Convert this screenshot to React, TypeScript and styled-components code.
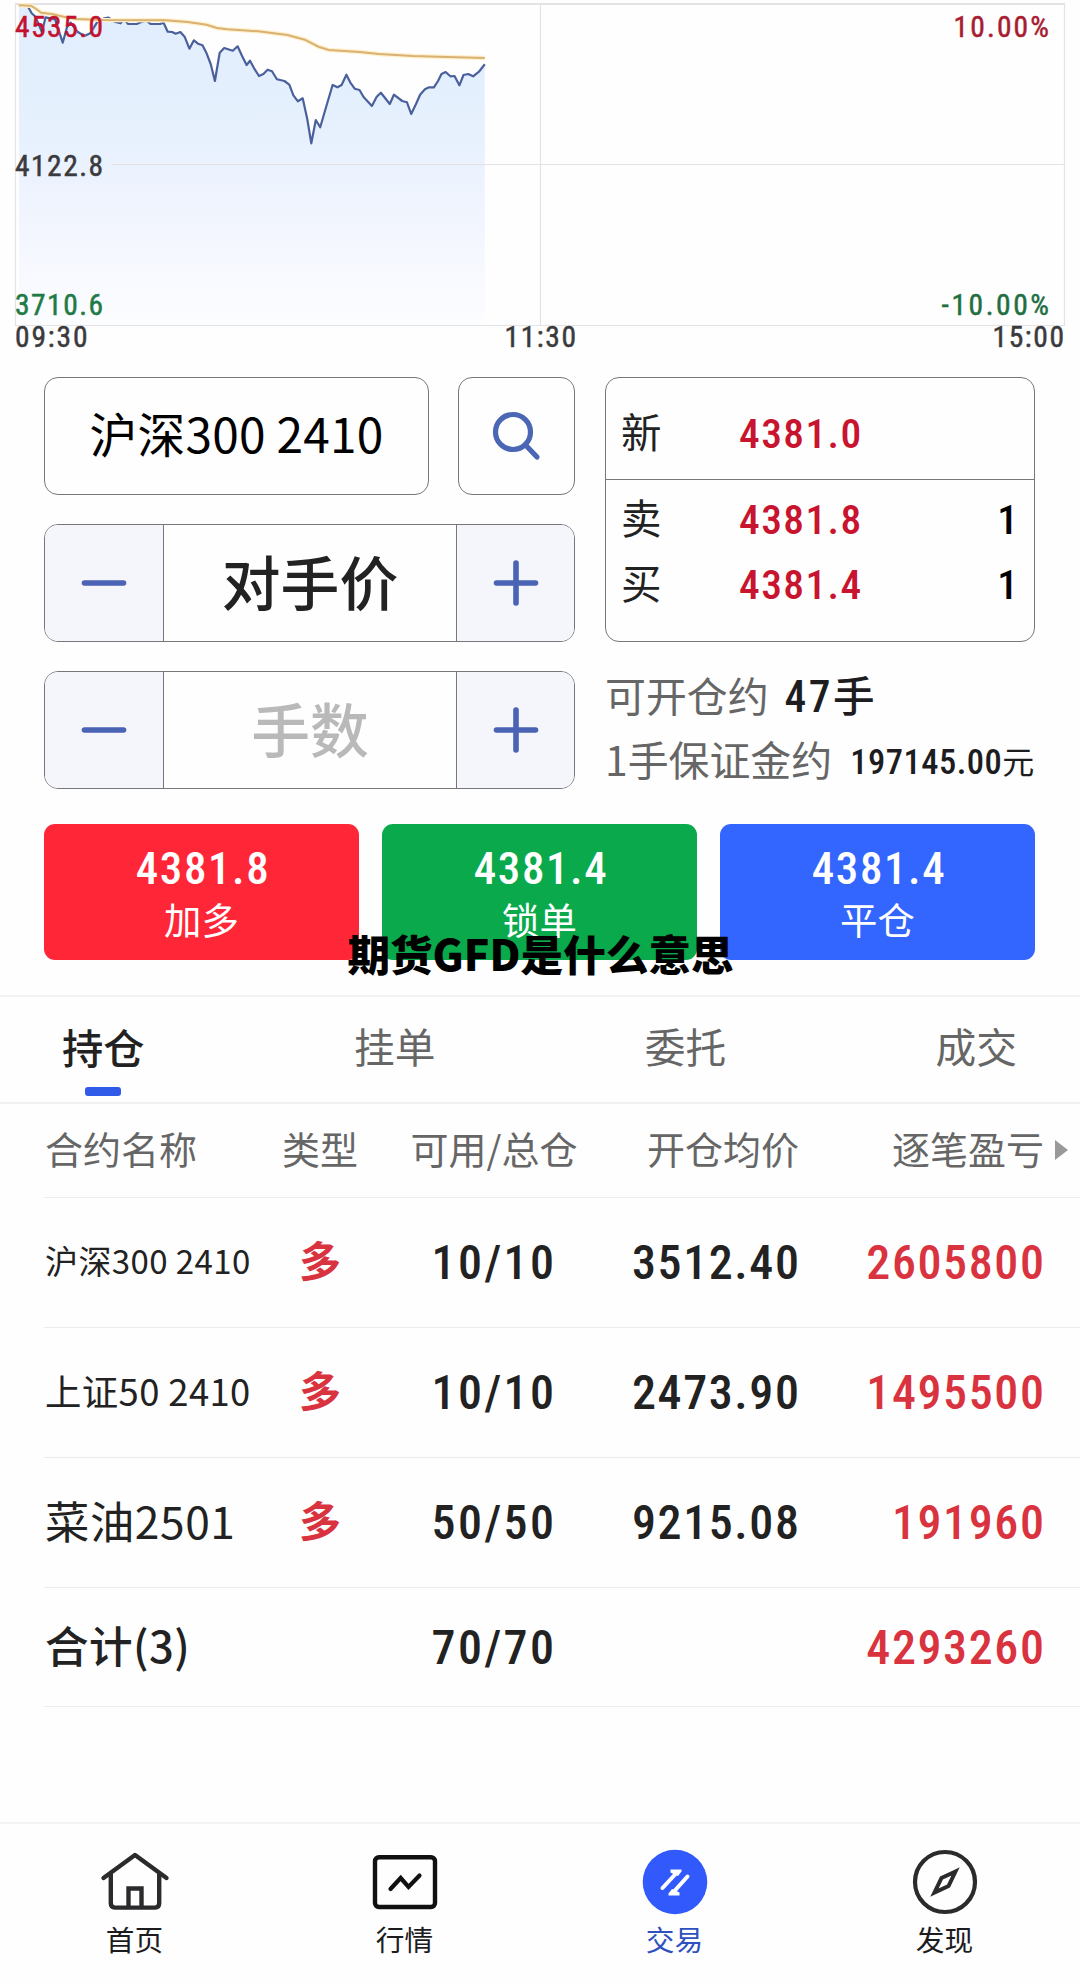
import React from "react";
import styled, { createGlobalStyle } from "styled-components";

const CJK = `"Noto Sans CJK SC", sans-serif`;
const NUM = `"Roboto Condensed", Roboto, "Noto Sans CJK SC", sans-serif`;

const GlobalStyle = createGlobalStyle`
  * { box-sizing: border-box; }
  body { margin: 0; background: #fefefe; font-family: ${CJK}; color: #222; }
`;

const Page = styled.main`
  position: relative;
  display: flex;
  flex-direction: column;
  width: 1080px;
  height: 1984px;
  overflow: hidden;
  background: #fefefe;
`;

/* ---------- Chart ---------- */

const ChartSvg = styled.svg`
  display: block;
  flex: none;
  font-family: ${NUM};
  font-size: 29.5px;
`;

const toPoints = (values: number[]) => {
  const out: string[] = [];
  for (let i = 0; i < values.length; i += 2) {
    out.push(`${(values[i] / 2.904).toFixed(1)},${(values[i + 1] / 3).toFixed(1)}`);
  }
  return out.join(" ");
};

const priceLine = toPoints([
  55, 17, 80, 17, 92, 40, 103, 50, 122, 97, 132, 52, 160, 58, 182, 128, 195, 80, 205, 68, 225, 95,
  245, 108, 262, 100, 285, 62, 300, 56, 315, 53, 335, 66, 350, 70, 361, 58, 372, 72, 397, 72, 412, 65,
  425, 62, 438, 72, 465, 72, 475, 68, 487, 95, 500, 96, 510, 101, 524, 96, 536, 110, 550, 146, 563, 121,
  575, 131, 588, 136, 600, 160, 612, 192, 624, 243, 638, 158, 651, 144, 676, 152, 690, 139, 703, 168,
  716, 195, 726, 182, 738, 205, 752, 228, 765, 222, 777, 209, 790, 214, 804, 238, 826, 243, 840, 254,
  852, 286, 865, 304, 879, 295, 892, 356, 904, 430, 917, 360, 930, 382, 948, 318, 966, 255, 980, 262,
  992, 255, 1006, 224, 1017, 247, 1030, 266, 1044, 270, 1056, 291, 1080, 318, 1094, 290, 1106, 278,
  1132, 312, 1144, 284, 1168, 303, 1182, 307, 1194, 342, 1208, 312, 1220, 284, 1234, 268, 1246, 262,
  1260, 262, 1272, 243, 1282, 222, 1294, 216, 1308, 229, 1320, 228, 1334, 256, 1346, 225, 1360, 222,
  1374, 229, 1392, 214, 1408, 193,
]);

const averageLine = toPoints([
  55, 16, 90, 17, 105, 27, 120, 38, 150, 42, 185, 50, 220, 57, 300, 60, 480, 61, 545, 66, 600, 74, 630, 84,
  660, 88, 750, 94, 835, 105, 885, 119, 925, 140, 955, 150, 1045, 156, 1100, 162, 1200, 168, 1300, 171,
  1408, 174,
]);

const Chart = () => (
  <ChartSvg width="1080" height="377" viewBox="0 0 1080 377">
    <defs>
      <linearGradient id="area" x1="0" y1="0" x2="0" y2="1">
        <stop offset="0" stopColor="#e0edfc" />
        <stop offset="0.42" stopColor="#e7f1fe" />
        <stop offset="0.62" stopColor="#f0f4fe" />
        <stop offset="1" stopColor="#fcfdff" />
      </linearGradient>
    </defs>
    <polygon points={`19,325 ${priceLine} 484.8,325`} fill="url(#area)" />
    <g stroke="#e3e3e5" fill="none">
      <path d="M15 4H1065" strokeWidth="2" />
      <path d="M15.5 4V325.5H1064.5V4M540.5 4V325M112 164.5H1064" strokeWidth="1.2" />
    </g>
    <polyline points={priceLine} fill="none" stroke="#4a609c" strokeWidth="2.2" strokeLinejoin="round" />
    <polyline points={averageLine} fill="none" stroke="#fff0cc" strokeWidth="4.5" />
    <polyline points={averageLine} fill="none" stroke="#d9b172" strokeWidth="2" />
    <g fill="#3a3a3c" strokeWidth="0.5">
      <text x="15" y="37" fill="#c3122f" stroke="#c3122f" textLength="88">4535.0</text>
      <text x="15" y="176.3" stroke="#3a3a3c" textLength="88">4122.8</text>
      <text x="15" y="315" fill="#1f7a45" stroke="#1f7a45" textLength="88">3710.6</text>
      <text x="15" y="347" stroke="#3a3a3c" textLength="72.5">09:30</text>
      <text x="504.5" y="347" stroke="#3a3a3c" textLength="71.5">11:30</text>
      <text x="992.5" y="347" stroke="#3a3a3c" textLength="71.5">15:00</text>
      <text x="953.5" y="37" fill="#a81c30" stroke="#a81c30" textLength="95.5">10.00%</text>
      <text x="941.5" y="315" fill="#1f6f42" stroke="#1f6f42" textLength="107.5">-10.00%</text>
    </g>
  </ChartSvg>
);

/* ---------- Order form ---------- */

const Form = styled.section`
  display: grid;
  grid-template-columns: 531px 430px;
  column-gap: 30px;
  padding-left: 44px;
  height: 447px;
  align-items: start;
`;

const Inputs = styled.div`
  display: flex;
  flex-direction: column;
  gap: 29px;
`;

const InputRow = styled.div`
  display: flex;
  gap: 29px;
`;

const Box = styled.div<{ $w: number }>`
  display: flex;
  align-items: center;
  justify-content: center;
  width: ${(p) => p.$w}px;
  height: 118px;
  border: 1px solid #77777b;
  border-radius: 14px;
  font-size: 47.8px;
  line-height: 60px;
  color: #000;
`;

const ContractName = styled.span`
  padding-bottom: 7px;
  white-space: pre;
  letter-spacing: 0.2px;
`;

const StepperBox = styled.div`
  display: grid;
  grid-template-columns: 119px 1fr 118px;
  height: 118px;
  border: 1px solid #77777b;
  border-radius: 14px;
  overflow: hidden;
`;

const StepButton = styled.button<{ $side: "left" | "right" }>`
  display: flex;
  align-items: center;
  justify-content: center;
  padding: 0;
  border: 0;
  border-${(p) => (p.$side === "left" ? "right" : "left")}: 1px solid #77777b;
  background: #f4f6fb;
`;

const StepValue = styled.div<{ $muted?: boolean }>`
  display: flex;
  align-items: center;
  justify-content: center;
  padding-bottom: 4px;
  font-size: 58.8px;
  line-height: 80px;
  font-weight: 500;
  color: ${(p) => (p.$muted ? "#b9b9b9" : "#222")};
`;

const StepIcon = ({ plus }: { plus?: boolean }) => (
  <svg width="50" height="50" viewBox="0 0 50 50" stroke="#4a63b4" strokeWidth="5.6" strokeLinecap="round">
    <path d={plus ? "M5.5 25H44.5M25 5V45" : "M5.5 25H44.5"} />
  </svg>
);

const Stepper = ({ value, muted }: { value: string; muted?: boolean }) => (
  <StepperBox>
    <StepButton $side="left"><StepIcon /></StepButton>
    <StepValue $muted={muted}>{value}</StepValue>
    <StepButton $side="right"><StepIcon plus /></StepButton>
  </StepperBox>
);

const Quotes = styled.div`
  height: 265px;
  border: 1px solid #77777b;
  border-radius: 14px;
`;

const QuoteLatest = styled.div`
  height: 102px;
  padding-top: 31px;
  border-bottom: 1px solid #77777b;
`;

const QuoteBook = styled.div`
  padding-top: 15px;
`;

const QuoteRow = styled.div`
  display: grid;
  grid-template-columns: 118px 1fr auto;
  align-items: center;
  height: 50px;
  margin-bottom: 15px;
  padding: 0 16px 0 15px;
  font-size: 40.5px;
  line-height: 50px;
`;

const QuoteLabel = styled.span`
  height: 50px;
  margin-top: -7px;
`;

const QuotePrice = styled.span`
  font: 500 41.5px/50px ${NUM};
  letter-spacing: 1.4px;
  color: #c8142e;
`;

const QuoteCount = styled.span`
  font: 500 41.5px/50px ${NUM};
  color: #000;
`;

const InfoBlock = styled.div`
  padding-top: 21px;
`;

const Info = styled.div`
  display: flex;
  align-items: baseline;
  height: 64px;
  line-height: 64px;
  font-size: 40.9px;
  color: #666;
  white-space: pre;
`;

const InfoValue = styled.b<{ $size: number; $gap: number; $spacing: number; $lift?: number }>`
  margin-left: ${(p) => p.$gap}px;
  font: 500 ${(p) => p.$size}px/60px ${NUM};
  letter-spacing: ${(p) => p.$spacing}px;
  transform: translateY(-${(p) => p.$lift || 0}px);
  color: #1d1d1f;
`;

const Unit = styled.span<{ $size: number; $weight: number }>`
  font-family: ${CJK};
  font-size: ${(p) => p.$size}px;
  font-weight: ${(p) => p.$weight};
  letter-spacing: 0;
`;

/* ---------- Action buttons ---------- */

const Actions = styled.section`
  display: grid;
  grid-template-columns: repeat(3, 1fr);
  gap: 23px;
  height: 171px;
  padding: 0 45px 35px 44px;
`;

const Action = styled.button<{ $color: string }>`
  display: flex;
  flex-direction: column;
  align-items: center;
  padding: 20px 0 0;
  border: 0;
  border-radius: 11px;
  background: ${(p) => p.$color};
  color: #fff;
  font: 500 45px/50px ${NUM};
  letter-spacing: 1.6px;
`;

const ActionPrice = styled.span`
  padding-left: 3px;
`;

const ActionLabel = styled.span`
  font: 400 37.4px/50px ${CJK};
  letter-spacing: 0;
`;

const Caption = styled.div`
  position: absolute;
  top: 923px;
  left: 0;
  width: 100%;
  padding-left: 1px;
  text-align: center;
  font-size: 42.6px;
  line-height: 60px;
  font-weight: 900;
  color: #000;
`;

/* ---------- Tabs ---------- */

const Tabs = styled.nav`
  display: flex;
  justify-content: space-between;
  height: 109px;
  padding: 0 63px 0 62px;
  border-top: 2px solid #f3f3f5;
  border-bottom: 2px solid #f1f1f3;
`;

const Tab = styled.div<{ $active?: boolean }>`
  display: flex;
  flex-direction: column;
  align-items: center;
  padding-top: 19px;
  font-size: ${(p) => (p.$active ? 41.3 : 40.7)}px;
  line-height: 60px;
  font-weight: ${(p) => (p.$active ? 500 : 400)};
  color: ${(p) => (p.$active ? "#222" : "#666")};
  &::after {
    content: "";
    width: 36px;
    height: 9px;
    margin-top: 11px;
    border-radius: 3px;
    background: ${(p) => (p.$active ? "#2f5be8" : "transparent")};
  }
`;

/* ---------- Positions table ---------- */

const Table = styled.section`
  padding-left: 44px;
  height: 719px;
`;

const Row = styled.div<{ $h: number }>`
  display: grid;
  grid-template-columns: 216px 120px 228px 191px 245px 36px;
  align-items: center;
  height: ${(p) => p.$h}px;
  border-bottom: 1.5px solid #ececee;
`;

const HeadCell = styled.div<{ $align?: string }>`
  height: 60px;
  margin-top: -4px;
  padding-left: ${(p) => (p.$align ? 0 : 1)}px;
  font-size: 38px;
  line-height: 60px;
  color: #666;
  white-space: nowrap;
  text-align: ${(p) => p.$align || "left"};
`;

const NameCell = styled.div<{ $size: number; $spacing: number; $bold?: boolean }>`
  height: 60px;
  margin-top: -5px;
  padding-left: 1px;
  font-size: ${(p) => p.$size}px;
  font-weight: ${(p) => (p.$bold ? 500 : 400)};
  letter-spacing: ${(p) => p.$spacing}px;
  line-height: 60px;
  white-space: nowrap;
`;

const SideCell = styled.div`
  height: 60px;
  margin-top: -7px;
  text-align: center;
  font-size: 42px;
  line-height: 60px;
  font-weight: 700;
  color: #d9333f;
`;

const NumCell = styled.div<{ $align?: string; $red?: boolean }>`
  padding-top: 2px;
  margin-right: ${(p) => (p.$align ? -1.5 : 0)}px;
  font: 500 48px/60px ${NUM};
  letter-spacing: ${(p) => (p.$align ? 1.6 : 2.4)}px;
  text-align: ${(p) => p.$align || "center"};
  color: ${(p) => (p.$red ? "#d9333f" : "#222")};
  white-space: nowrap;
`;

const Arrow = styled.div`
  width: 0;
  margin-left: 11px;
  border: solid transparent;
  border-width: 10.5px 0 10.5px 13px;
  border-left-color: #999;
`;

const positions = [
  { name: "沪深300 2410", size: 33, spacing: 0.4, side: "多", lots: "10/10", price: "3512.40", pnl: "2605800", h: 130 },
  { name: "上证50 2410", size: 36.4, spacing: 0.4, side: "多", lots: "10/10", price: "2473.90", pnl: "1495500", h: 130 },
  { name: "菜油2501", size: 44.3, spacing: 0.6, side: "多", lots: "50/50", price: "9215.08", pnl: "191960", h: 130 },
  { name: "合计(3)", size: 43.6, spacing: 0.4, side: "", lots: "70/70", price: "", pnl: "4293260", h: 119, bold: true },
];

/* ---------- Bottom bar ---------- */

const BottomBar = styled.nav`
  display: grid;
  grid-template-columns: repeat(4, 1fr);
  height: 162px;
  border-top: 2px solid #f3f3f5;
`;

const BarItem = styled.div<{ $active?: boolean }>`
  display: flex;
  flex-direction: column;
  align-items: center;
  padding-top: 23px;
  font-size: 28.7px;
  line-height: 40px;
  color: ${(p) => (p.$active ? "#2f50c0" : "#1c1c1e")};
  svg { margin-bottom: 2px; flex: none; }
`;

const BarLabel = styled.span`
  padding-right: 1px;
`;

const HomeIcon = () => (
  <svg width="70" height="70" viewBox="0 0 70 70" fill="none" stroke="#2b2b2d" strokeWidth="4.4">
    <path d="M3.5 31L35 8L66.5 31" strokeLinecap="round" strokeLinejoin="round" />
    <path d="M10.8 27V56Q10.8 60.6 15 60.6H55Q59.2 60.6 59.2 56V27M28.5 60V41.5H41.5V60" />
  </svg>
);

const MarketIcon = () => (
  <svg width="70" height="70" viewBox="0 0 70 70" fill="none" stroke="#111" strokeWidth="4.4">
    <rect x="5" y="10.2" width="60" height="49.8" rx="4" />
    <path d="M20.5 42L30.7 31L38.5 40L49.5 28.5" strokeLinecap="round" strokeLinejoin="miter" strokeWidth="4.2" />
  </svg>
);

const TradeIcon = () => (
  <svg width="70" height="70" viewBox="0 0 70 70">
    <circle cx="35" cy="35" r="32.3" fill="#3159fb" />
    <path d="M22.5 41L36 26.5M47.5 29.5L34 44.5" stroke="#fff" strokeWidth="4" strokeLinecap="round" />
    <path
      d="M30.5 22.5H41.5V24.5L38 29L33.5 27L30.5 25.5ZM39.5 48.5H28.5V46.5L32 42L36.5 44L39.5 45.5Z"
      fill="#fff"
    />
  </svg>
);

const DiscoverIcon = () => (
  <svg width="70" height="70" viewBox="0 0 70 70" fill="none" stroke="#2b2b2d" strokeWidth="4.2">
    <circle cx="35" cy="35" r="30" />
    <path d="M45.5 24.5L31.5 31L24.5 45.5L38.5 39Z" strokeLinejoin="miter" strokeWidth="4" />
  </svg>
);

export default function App() {
  return (
    <>
      <GlobalStyle />
      <Page>
        <Chart />
        <Form>
          <Inputs>
            <InputRow>
              <Box $w={385}><ContractName>沪深300 2410</ContractName></Box>
              <Box $w={117}>
                <svg width="60" height="60" viewBox="0 0 60 60" fill="none" stroke="#4a66b5" strokeWidth="5.2">
                  <circle cx="26" cy="26" r="17.5" />
                  <path d="M39 39.5L50 51" strokeLinecap="round" />
                </svg>
              </Box>
            </InputRow>
            <Stepper value="对手价" />
            <Stepper value="手数" muted />
          </Inputs>
          <div>
            <Quotes>
              <QuoteLatest>
                <QuoteRow>
                  <QuoteLabel>新</QuoteLabel>
                  <QuotePrice>4381.0</QuotePrice>
                </QuoteRow>
              </QuoteLatest>
              <QuoteBook>
                <QuoteRow>
                  <QuoteLabel>卖</QuoteLabel>
                  <QuotePrice>4381.8</QuotePrice>
                  <QuoteCount>1</QuoteCount>
                </QuoteRow>
                <QuoteRow>
                  <QuoteLabel>买</QuoteLabel>
                  <QuotePrice>4381.4</QuotePrice>
                  <QuoteCount>1</QuoteCount>
                </QuoteRow>
              </QuoteBook>
            </Quotes>
            <InfoBlock>
              <Info>
                可开仓约
                <InfoValue $size={43.5} $gap={16} $spacing={2.4}>47<Unit $size={41.6} $weight={500}>手</Unit></InfoValue>
              </Info>
              <Info>
                1手保证金约
                <InfoValue $size={34.5} $gap={18} $spacing={0.5} $lift={2}>
                  197145.00<Unit $size={32} $weight={400}>元</Unit>
                </InfoValue>
              </Info>
            </InfoBlock>
          </div>
        </Form>
        <Actions>
          <Action $color="#ff2638"><ActionPrice>4381.8</ActionPrice><ActionLabel>加多</ActionLabel></Action>
          <Action $color="#09a94c"><ActionPrice>4381.4</ActionPrice><ActionLabel>锁单</ActionLabel></Action>
          <Action $color="#3365ff"><ActionPrice>4381.4</ActionPrice><ActionLabel>平仓</ActionLabel></Action>
        </Actions>
        <Tabs>
          <Tab $active>持仓</Tab>
          <Tab>挂单</Tab>
          <Tab>委托</Tab>
          <Tab>成交</Tab>
        </Tabs>
        <Table>
          <Row $h={94}>
            <HeadCell>合约名称</HeadCell>
            <HeadCell $align="center">类型</HeadCell>
            <HeadCell $align="center">可用/总仓</HeadCell>
            <HeadCell $align="right">开仓均价</HeadCell>
            <HeadCell $align="right">逐笔盈亏</HeadCell>
            <Arrow />
          </Row>
          {positions.map((p) => (
            <Row key={p.name} $h={p.h}>
              <NameCell $size={p.size} $spacing={p.spacing} $bold={p.bold}>{p.name}</NameCell>
              <SideCell>{p.side}</SideCell>
              <NumCell>{p.lots}</NumCell>
              <NumCell $align="right">{p.price}</NumCell>
              <NumCell $align="right" $red>{p.pnl}</NumCell>
            </Row>
          ))}
        </Table>
        <BottomBar>
          <BarItem><HomeIcon /><BarLabel>首页</BarLabel></BarItem>
          <BarItem><MarketIcon /><BarLabel>行情</BarLabel></BarItem>
          <BarItem $active><TradeIcon /><BarLabel>交易</BarLabel></BarItem>
          <BarItem><DiscoverIcon /><BarLabel>发现</BarLabel></BarItem>
        </BottomBar>
        <Caption>期货GFD是什么意思</Caption>
      </Page>
    </>
  );
}
